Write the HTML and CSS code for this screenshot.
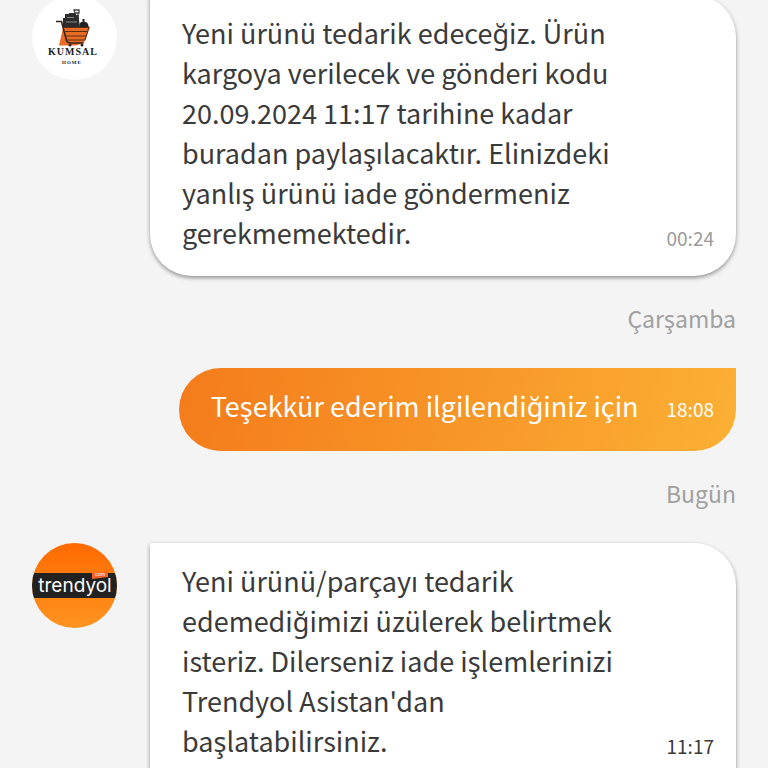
FILE: index.html
```
<!DOCTYPE html>
<html lang="tr">

<head>
    <meta charset="UTF-8">
    <meta name="viewport" content="width=device-width, initial-scale=1.0">
    <title>Mesajlar</title>
    <link rel="stylesheet" href="styles.css">
</head>

<body>
    <main class="chat">
        <!-- seller -->
        <article class="message">
            <svg class="avatar" viewBox="0 0 85 85" role="img" aria-label="Kumsal Home">
                <circle cx="42.500" cy="42.500" r="42.500" fill="#fff" />
                <path d="M31 33 L27 50.500 H44 L52 48 L57 31Z" fill="#e96c24" />
                <path d="M31 32v-9h2v-4h4v-1h7v2h3v5l1 7z" fill="#2b2b2b" />
                <path d="M48 32c-1-3 0-5 2.500-5v-3h2v3c3 0 4 2 4 5z" fill="#222" />
                <path d="M42 15h5v3h-4zM46 18v5" fill="none" stroke="#444" stroke-width="1.300" />
                <path d="M35 22.500h7M34 27h11" fill="none" stroke="#8a8a8a" />
                <path d="M24 26.500h5.500l5 19q1 2.500 4 2.500h13" fill="none" stroke="#33241c" stroke-width="1.600" />
                <path d="M31 32.500h26l-4 12.500H35M32 36.500h23M33 41h21" fill="none" stroke="#5a2e16" stroke-width="1.200" />
                <circle cx="38" cy="50" r="1.500" fill="#33241c" />
                <circle cx="50" cy="50" r="1.500" fill="#33241c" />
                <text class="logo-kumsal" x="41" y="60">KUMSAL</text>
                <text class="logo-home" x="40" y="69">HOME</text>
            </svg>
            <div class="bubble">
                <p class="text">Yeni ürünü tedarik edeceğiz. Ürün kargoya verilecek ve gönderi kodu 20.09.2024 11:17 tarihine kadar buradan paylaşılacaktır. Elinizdeki yanlış ürünü iade göndermeniz gerekmemektedir.</p>
                <time class="time">00:24</time>
            </div>
        </article>

        <h2 class="day">Çarşamba</h2>

        <article class="message message-own">
            <div class="bubble">
                <p class="text">Teşekkür ederim ilgilendiğiniz için</p>
                <time class="time">18:08</time>
            </div>
        </article>

        <h2 class="day">Bugün</h2>

        <!-- trendyol -->
        <article class="message message-last">
            <svg class="avatar" viewBox="0 0 85 85" role="img" aria-label="Trendyol">
                <defs>
                    <linearGradient id="orange" x1="0" y1="0" x2="0" y2="1">
                        <stop offset="0" stop-color="#ff6a00" />
                        <stop offset="1" stop-color="#ff9420" />
                    </linearGradient>
                    <clipPath id="round">
                        <circle cx="42.500" cy="42.500" r="42.500" />
                    </clipPath>
                </defs>
                <g clip-path="url(#round)">
                    <rect width="85" height="85" fill="url(#orange)" />
                    <rect y="30" width="85" height="25" fill="#222" />
                    <path d="M60 30l16-2v6l-16 2z" fill="#f4622a" />
                    <text class="logo-com" x="68" y="33">com</text>
                    <text class="logo-trendyol" x="43" y="49">trendyol</text>
                </g>
            </svg>
            <div class="bubble">
                <p class="text">Yeni ürünü/parçayı tedarik edemediğimizi üzülerek belirtmek isteriz. Dilerseniz iade işlemlerinizi Trendyol Asistan'dan başlatabilirsiniz.</p>
                <time class="time time-new">11:17</time>
            </div>
        </article>
    </main>
</body>

</html>
```

FILE: styles.css
```
* {
    box-sizing: border-box;
}

body {
    margin: 0;
    height: 100vh;
    overflow: hidden;
    background-color: #f4f4f4;
    color: #3a3a3a;
    font-family: "Noto Sans CJK SC", "Noto Sans", sans-serif;
}

.chat {
    /* scrolled a little past the first bubble */
    margin-top: -5px;
    padding: 0 32px;
}

.message {
    display: flex;
    align-items: flex-start;
    gap: 33px;
}

.message-own {
    justify-content: flex-end;
}

.avatar {
    flex: none;
    width: 85px;
    height: 85px;
}

.bubble {
    display: flex;
    flex: 1;
    align-items: flex-end;
    gap: 28px;
    padding: 18px 22px 23px 32px;
    border-radius: 2px 42px 42px 42px;
    background-color: #fff;
    box-shadow: 0 2px 4px rgba(0, 0, 0, .4);
}

.message-own .bubble {
    flex: none;
    padding-bottom: 25px;
    border-radius: 42px 0 42px 42px;
    background: linear-gradient(100deg, #f47b1b, #fbb034);
    box-shadow: none;
    color: #fff;
}

.message-last .bubble {
    border-radius: 2px 42px 0 0;
}

.text {
    flex: 1;
    margin: 0;
    font-size: 27px;
    line-height: 40px;
}

.time {
    font-size: 19px;
    line-height: 30px;
    color: #9b9b9b;
}

.time-new {
    color: #3a3a3a;
}

.message-own .time {
    line-height: 34px;
    color: #fff;
}

.day {
    margin: 0;
    padding: 22px 0 30px;
    font-size: 23px;
    font-weight: 400;
    line-height: 40px;
    text-align: right;
    color: #a0a0a0;
}

/* logo */
.logo-kumsal,
.logo-home {
    font-family: "Liberation Serif", serif;
    font-weight: 700;
    text-anchor: middle;
    fill: #222;
}

.logo-kumsal {
    font-size: 10px;
    letter-spacing: 1px;
}

.logo-home {
    font-size: 5px;
    letter-spacing: 1px;
}

.logo-trendyol,
.logo-com {
    font-family: Inter, sans-serif;
    text-anchor: middle;
    fill: #fff;
}

.logo-trendyol {
    font-size: 19px;
}

.logo-com {
    font-size: 5px;
}
```
